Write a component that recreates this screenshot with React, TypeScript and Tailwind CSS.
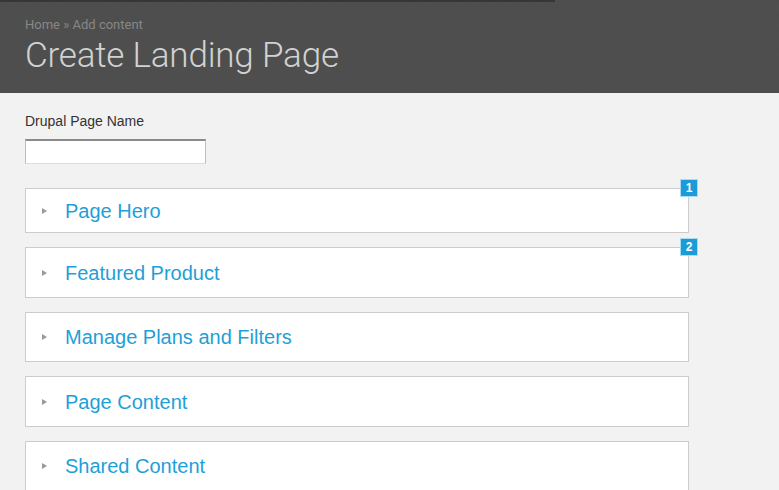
import React from "react";

type Section = {
  title: string;
  badge?: string;
  height: string;
};

const sections: Section[] = [
  { title: "Page Hero", badge: "1", height: "h-[45px]" },
  { title: "Featured Product", badge: "2", height: "h-[51px]" },
  { title: "Manage Plans and Filters", height: "h-[50px]" },
  { title: "Page Content", height: "h-[51px]" },
  { title: "Shared Content", height: "h-[50px]" },
];

function CollapsedPanel({ title, badge, height }: Section) {
  return (
    <div
      className={`relative flex w-[664px] items-center border border-[#cccccc] bg-white pl-[16px] ${height}`}
    >
      <span className="h-0 w-0 border-y-[3px] border-l-[5px] border-y-transparent border-l-[#9a9a9a]" />
      <span className="ml-[18px] text-[20px] leading-6 text-[#1e9fd8]">
        {title}
      </span>
      {badge && (
        <span className="absolute -right-[10px] -top-[10px] flex h-[18px] w-[18px] items-center justify-center border border-[#a9dcf3] bg-[#1b9cd8] text-[12px] font-bold leading-none text-white">
          {badge}
        </span>
      )}
    </div>
  );
}

export default function App() {
  return (
    <div
      className="min-h-[490px] bg-[#f2f2f2] text-[#333]"
      style={{ fontFamily: '"Liberation Sans", Arial, sans-serif' }}
    >
      {/* header */}
      <header className="h-[93px] bg-[#4e4e4e] bg-[repeating-linear-gradient(45deg,#4f4f4f_0px,#4f4f4f_1px,#4d4d4d_1px,#4d4d4d_2px)] font-['Roboto',sans-serif]">
        <div className="h-[2px] w-[555px] bg-[#363636]" />
        <div className="pl-[25px] pt-[15px]">
          <div className="text-[13px] leading-4 text-[#878787]">
            Home » Add content
          </div>
          <h1 className="mt-[3px] text-[35px] font-light leading-10 tracking-[-0.2px] text-[#d2d2d2]">
            Create Landing Page
          </h1>
        </div>
      </header>

      <main className="px-[25px] pt-[20px]">
        <label className="block text-[14px] leading-4 text-[#333]">
          Drupal Page Name
        </label>
        <input
          type="text"
          className="mt-[10px] block h-[25px] w-[181px] border border-t-2 border-x-[#bdbdbd] border-b-[#dcdcdc] border-t-[#8a8a8a] bg-white outline-none"
        />

        <div className="mt-[24px] flex flex-col gap-[14px]">
          {sections.map((s) => (
            <CollapsedPanel key={s.title} {...s} />
          ))}
        </div>
      </main>
    </div>
  );
}
